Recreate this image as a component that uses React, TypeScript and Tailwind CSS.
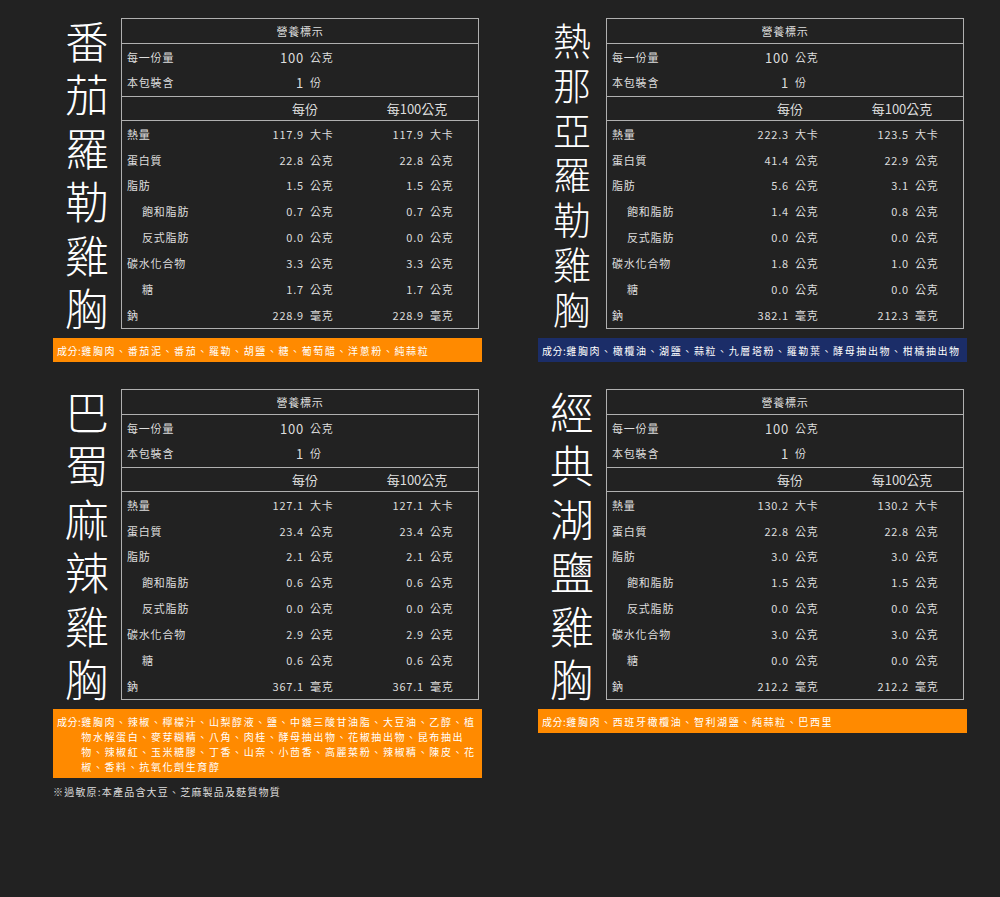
const F = { fontFamily: '"Noto Sans CJK TC","Noto Sans CJK SC",sans-serif' };

type P = { title: string; rows: [string, string, string, string, string, boolean?][]; ing: string; bg: string; };

const data: P[] = [
  { title: '番茄羅勒雞胸', bg: 'bg-[#ff8a00]', ing: '雞胸肉、番茄泥、番茄、羅勒、胡鹽、糖、葡萄醋、洋蔥粉、純蒜粒',
    rows: [['熱量','117.9','大卡','117.9','大卡'],['蛋白質','22.8','公克','22.8','公克'],['脂肪','1.5','公克','1.5','公克'],['飽和脂肪','0.7','公克','0.7','公克',true],['反式脂肪','0.0','公克','0.0','公克',true],['碳水化合物','3.3','公克','3.3','公克'],['糖','1.7','公克','1.7','公克',true],['鈉','228.9','毫克','228.9','毫克']] },
  { title: '熱那亞羅勒雞胸', bg: 'bg-[#1b2d68]', ing: '雞胸肉、橄欖油、湖鹽、蒜粒、九層塔粉、羅勒葉、酵母抽出物、柑橘抽出物',
    rows: [['熱量','222.3','大卡','123.5','大卡'],['蛋白質','41.4','公克','22.9','公克'],['脂肪','5.6','公克','3.1','公克'],['飽和脂肪','1.4','公克','0.8','公克',true],['反式脂肪','0.0','公克','0.0','公克',true],['碳水化合物','1.8','公克','1.0','公克'],['糖','0.0','公克','0.0','公克',true],['鈉','382.1','毫克','212.3','毫克']] },
  { title: '巴蜀麻辣雞胸', bg: 'bg-[#ff8a00]', ing: '雞胸肉、辣椒、檸檬汁、山梨醇液、鹽、中鏈三酸甘油脂、大豆油、乙醇、植物水解蛋白、麥芽糊精、八角、肉桂、酵母抽出物、花椒抽出物、昆布抽出物、辣椒紅、玉米糖膠、丁香、山奈、小茴香、高麗菜粉、辣椒精、陳皮、花椒、香料、抗氧化劑生育醇',
    rows: [['熱量','127.1','大卡','127.1','大卡'],['蛋白質','23.4','公克','23.4','公克'],['脂肪','2.1','公克','2.1','公克'],['飽和脂肪','0.6','公克','0.6','公克',true],['反式脂肪','0.0','公克','0.0','公克',true],['碳水化合物','2.9','公克','2.9','公克'],['糖','0.6','公克','0.6','公克',true],['鈉','367.1','毫克','367.1','毫克']] },
  { title: '經典湖鹽雞胸', bg: 'bg-[#ff8a00]', ing: '雞胸肉、西班牙橄欖油、智利湖鹽、純蒜粒、巴西里',
    rows: [['熱量','130.2','大卡','130.2','大卡'],['蛋白質','22.8','公克','22.8','公克'],['脂肪','3.0','公克','3.0','公克'],['飽和脂肪','1.5','公克','1.5','公克',true],['反式脂肪','0.0','公克','0.0','公克',true],['碳水化合物','3.0','公克','3.0','公克'],['糖','0.0','公克','0.0','公克',true],['鈉','212.2','毫克','212.2','毫克']] },
];

function Row({ l, a, b, c, d, ind }: { l: string; a: string; b: string; c: string; d: string; ind?: boolean }) {
  return (
    <div className="grid grid-cols-[120px_62px_50px_70px_40px] items-center h-[25.6px] text-[11px] text-[#ddd] tracking-[0.8px]">
      <div className={ind ? 'pl-5' : 'pl-[5px]'}>{l}</div>
      <div className="text-right">{a}</div>
      <div className="pl-[6px]">{b}</div>
      <div className="text-right">{c}</div>
      <div className="pl-[6px]">{d}</div>
    </div>
  );
}

function Panel({ p }: { p: P }) {
  return (
    <div className="flex flex-col w-[429px]">
      <div className="flex h-[311px]">
        <div className={`w-[68px] flex flex-col justify-between items-center h-full text-white font-light leading-none ${p.title.length > 6 ? 'text-[38px] py-[2px]' : 'text-[44px]'}`}>
          {p.title.split('').map((ch, i) => <div key={i}>{ch}</div>)}
        </div>
        <div className="w-[358px] border-[1.5px] border-[#b0b0b0] flex flex-col">
          <div className="h-[25px] flex items-center justify-center text-[11px] text-[#ddd] tracking-[0.8px] border-b-[1.5px] border-[#b0b0b0]">營養標示</div>
          <div className="border-b-[1.5px] border-[#b0b0b0] py-[1px] tracking-[0.8px]">
            <div className="grid grid-cols-[120px_62px_50px] items-center h-[25px] text-[#ddd]">
              <div className="pl-[5px] text-[11px]">每一份量</div><div className="text-right text-[13px]">100</div><div className="pl-[6px] text-[11px]">公克</div>
            </div>
            <div className="grid grid-cols-[120px_62px_50px] items-center h-[25px] text-[#ddd]">
              <div className="pl-[5px] text-[11px]">本包裝含</div><div className="text-right text-[13px]">1</div><div className="pl-[6px] text-[11px]">份</div>
            </div>
          </div>
          <div className="h-[24px] grid grid-cols-[120px_112px_110px] items-center text-[13px] text-[#ddd] border-b-[1.5px] border-[#b0b0b0]">
            <div /><div className="text-center pl-[14px]">每份</div><div className="text-center pl-[16px]">每100公克</div>
          </div>
          <div className="flex-1 flex flex-col justify-around">
            {p.rows.map((r, i) => <Row key={i} l={r[0]} a={r[1]} b={r[2]} c={r[3]} d={r[4]} ind={r[5]} />)}
          </div>
        </div>
      </div>
      <div className={`mt-[9px] ${p.bg} flex text-[10px] leading-[15px] text-white pl-[4px] pr-[6px] py-[4.5px] tracking-[1.6px]`}>
        <span className="shrink-0 tracking-[0.5px]">成分:</span><span className="flex-1">{p.ing}</span>
      </div>
    </div>
  );
}

export default function App() {
  return (
    <div style={F} className="w-[1000px] h-[897px] bg-[#222222] pt-[18px] pl-[53px]">
      <div className="grid grid-cols-[429px_429px] gap-x-[56px] gap-y-[27px] items-start">
        {data.map((p, i) => <Panel key={i} p={p} />)}
      </div>
      <div className="mt-[6px] text-[10px] text-[#ddd] tracking-[1.2px]">※過敏原:本產品含大豆、芝麻製品及麩質物質</div>
    </div>
  );
}
